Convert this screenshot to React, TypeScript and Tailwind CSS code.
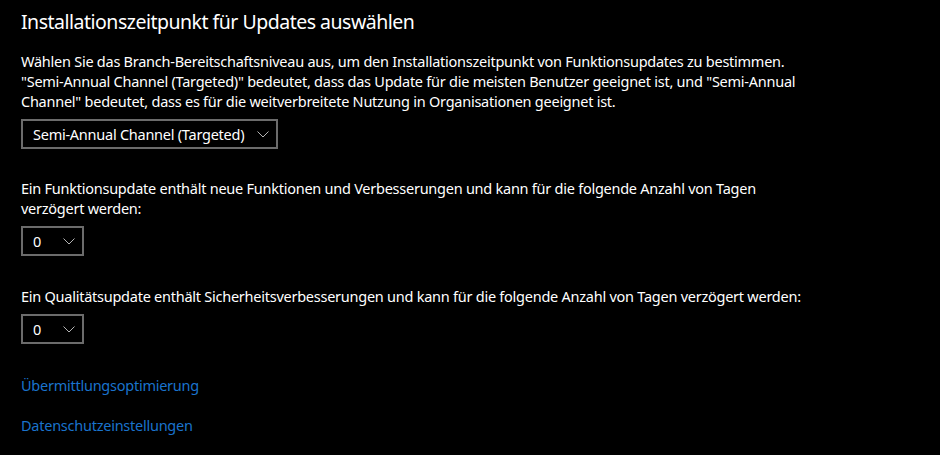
import React from "react";

const Chevron = () => (
  <svg width="12" height="7" viewBox="0 0 12 7" fill="none" className="shrink-0">
    <polyline points="0.5,0.5 6,6 11.5,0.5" stroke="#b5b5b5" strokeWidth="1" />
  </svg>
);

const Select = ({ value, width }: { value: string; width: string }) => (
  <div className={`mt-2 flex h-[30px] items-center justify-between border-2 border-[#6b6b6b] pl-[10px] pr-[7px] ${width}`}>
    <span className="whitespace-nowrap leading-[20px]">{value}</span>
    <Chevron />
  </div>
);

export default function App() {
  return (
    <div
      className="min-h-screen w-full bg-black pl-[21px] pt-[8px] text-white"
      style={{ fontFamily: '"Noto Sans", "Open Sans", sans-serif' }}
    >
      <h1 className="whitespace-nowrap text-[19.5px] font-normal leading-[28px] tracking-[-0.5px]">
        Installationszeitpunkt für Updates auswählen
      </h1>

      <div className="text-[14.5px] tracking-[-0.25px]">
        <p className="mt-[15px] whitespace-nowrap leading-[20px]">
          Wählen Sie das Branch-Bereitschaftsniveau aus, um den Installationszeitpunkt von Funktionsupdates zu bestimmen.
          <br />
          "Semi-Annual Channel (Targeted)" bedeutet, dass das Update für die meisten Benutzer geeignet ist, und "Semi-Annual
          <br />
          Channel" bedeutet, dass es für die weitverbreitete Nutzung in Organisationen geeignet ist.
        </p>
        <Select value="Semi-Annual Channel (Targeted)" width="w-[257px]" />

        <p className="mt-[29px] whitespace-nowrap leading-[20px]">
          Ein Funktionsupdate enthält neue Funktionen und Verbesserungen und kann für die folgende Anzahl von Tagen
          <br />
          verzögert werden:
        </p>
        <Select value="0" width="w-[63px]" />

        <p className="mt-[30px] whitespace-nowrap leading-[20px]">
          Ein Qualitätsupdate enthält Sicherheitsverbesserungen und kann für die folgende Anzahl von Tagen verzögert werden:
        </p>
        <Select value="0" width="w-[63px]" />

        <div className="mt-[31px] flex flex-col gap-[20px] leading-[20px] text-[#1a73cc]">
          <a className="w-fit cursor-pointer">Übermittlungsoptimierung</a>
          <a className="w-fit cursor-pointer">Datenschutzeinstellungen</a>
        </div>
      </div>
    </div>
  );
}
